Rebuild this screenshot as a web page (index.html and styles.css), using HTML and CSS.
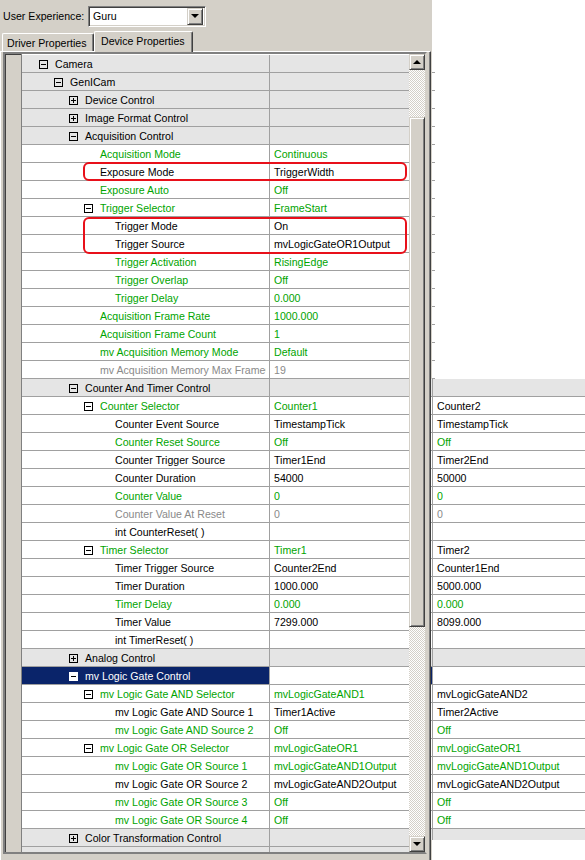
FILE: index.html
```html
<!DOCTYPE html>
<html>
<head>
<meta charset="utf-8">
<link rel="stylesheet" href="styles.css">
</head>
<body>
<div class="win">
  <div class="toolbar">
    <span class="lbl">User Experience:</span>
    <div class="combo"><span class="ctext">Guru</span><span class="cbtn"><i class="dn"></i></span></div>
  </div>
  <div class="tabs">
    <div class="tab">Driver Properties</div>
    <div class="tab act">Device Properties</div>
  </div>
  <div class="panel">
    <div class="frame">
      <div class="gutter"></div>
      <div class="rows">
        <div class="row cat"><div class="nm l0"><i class="bx"></i><span>Camera</span></div><div class="vl"></div></div>
        <div class="row cat"><div class="nm l1"><i class="bx"></i><span>GenICam</span></div><div class="vl"></div></div>
        <div class="row cat"><div class="nm l2"><i class="bx pl"></i><span>Device Control</span></div><div class="vl"></div></div>
        <div class="row cat"><div class="nm l2"><i class="bx pl"></i><span>Image Format Control</span></div><div class="vl"></div></div>
        <div class="row cat"><div class="nm l2"><i class="bx"></i><span>Acquisition Control</span></div><div class="vl"></div></div>
        <div class="row g"><div class="nm l3"><i class="sl"></i><span>Acquisition Mode</span></div><div class="vl"><span>Continuous</span></div></div>
        <div class="row"><div class="nm l3"><i class="sl"></i><span>Exposure Mode</span></div><div class="vl"><span>TriggerWidth</span></div></div>
        <div class="row g"><div class="nm l3"><i class="sl"></i><span>Exposure Auto</span></div><div class="vl"><span>Off</span></div></div>
        <div class="row g"><div class="nm l3"><i class="bx"></i><span>Trigger Selector</span></div><div class="vl"><span>FrameStart</span></div></div>
        <div class="row"><div class="nm l4"><i class="sl"></i><span>Trigger Mode</span></div><div class="vl"><span>On</span></div></div>
        <div class="row"><div class="nm l4"><i class="sl"></i><span>Trigger Source</span></div><div class="vl"><span>mvLogicGateOR1Output</span></div></div>
        <div class="row g"><div class="nm l4"><i class="sl"></i><span>Trigger Activation</span></div><div class="vl"><span>RisingEdge</span></div></div>
        <div class="row g"><div class="nm l4"><i class="sl"></i><span>Trigger Overlap</span></div><div class="vl"><span>Off</span></div></div>
        <div class="row g"><div class="nm l4"><i class="sl"></i><span>Trigger Delay</span></div><div class="vl"><span>0.000</span></div></div>
        <div class="row g"><div class="nm l3"><i class="sl"></i><span>Acquisition Frame Rate</span></div><div class="vl"><span>1000.000</span></div></div>
        <div class="row g"><div class="nm l3"><i class="sl"></i><span>Acquisition Frame Count</span></div><div class="vl"><span>1</span></div></div>
        <div class="row g"><div class="nm l3"><i class="sl"></i><span>mv Acquisition Memory Mode</span></div><div class="vl"><span>Default</span></div></div>
        <div class="row d"><div class="nm l3"><i class="sl"></i><span class="clip">mv Acquisition Memory Max FrameCount</span></div><div class="vl"><span>19</span></div></div>
        <div class="row cat"><div class="nm l2"><i class="bx"></i><span>Counter And Timer Control</span></div><div class="vl"></div></div>
        <div class="row g"><div class="nm l3"><i class="bx"></i><span>Counter Selector</span></div><div class="vl"><span>Counter1</span></div></div>
        <div class="row"><div class="nm l4"><i class="sl"></i><span>Counter Event Source</span></div><div class="vl"><span>TimestampTick</span></div></div>
        <div class="row g"><div class="nm l4"><i class="sl"></i><span>Counter Reset Source</span></div><div class="vl"><span>Off</span></div></div>
        <div class="row"><div class="nm l4"><i class="sl"></i><span>Counter Trigger Source</span></div><div class="vl"><span>Timer1End</span></div></div>
        <div class="row"><div class="nm l4"><i class="sl"></i><span>Counter Duration</span></div><div class="vl"><span>54000</span></div></div>
        <div class="row g"><div class="nm l4"><i class="sl"></i><span>Counter Value</span></div><div class="vl"><span>0</span></div></div>
        <div class="row d"><div class="nm l4"><i class="sl"></i><span>Counter Value At Reset</span></div><div class="vl"><span>0</span></div></div>
        <div class="row"><div class="nm l4"><i class="sl"></i><span>int CounterReset( )</span></div><div class="vl"></div></div>
        <div class="row g"><div class="nm l3"><i class="bx"></i><span>Timer Selector</span></div><div class="vl"><span>Timer1</span></div></div>
        <div class="row"><div class="nm l4"><i class="sl"></i><span>Timer Trigger Source</span></div><div class="vl"><span>Counter2End</span></div></div>
        <div class="row"><div class="nm l4"><i class="sl"></i><span>Timer Duration</span></div><div class="vl"><span>1000.000</span></div></div>
        <div class="row g"><div class="nm l4"><i class="sl"></i><span>Timer Delay</span></div><div class="vl"><span>0.000</span></div></div>
        <div class="row"><div class="nm l4"><i class="sl"></i><span>Timer Value</span></div><div class="vl"><span>7299.000</span></div></div>
        <div class="row"><div class="nm l4"><i class="sl"></i><span>int TimerReset( )</span></div><div class="vl"></div></div>
        <div class="row cat"><div class="nm l2"><i class="bx pl"></i><span>Analog Control</span></div><div class="vl"></div></div>
        <div class="row sel"><div class="nm l2"><i class="bx"></i><span>mv Logic Gate Control</span></div><div class="vl"></div></div>
        <div class="row g"><div class="nm l3"><i class="bx"></i><span>mv Logic Gate AND Selector</span></div><div class="vl"><span>mvLogicGateAND1</span></div></div>
        <div class="row"><div class="nm l4"><i class="sl"></i><span>mv Logic Gate AND Source 1</span></div><div class="vl"><span>Timer1Active</span></div></div>
        <div class="row g"><div class="nm l4"><i class="sl"></i><span>mv Logic Gate AND Source 2</span></div><div class="vl"><span>Off</span></div></div>
        <div class="row g"><div class="nm l3"><i class="bx"></i><span>mv Logic Gate OR Selector</span></div><div class="vl"><span>mvLogicGateOR1</span></div></div>
        <div class="row g"><div class="nm l4"><i class="sl"></i><span>mv Logic Gate OR Source 1</span></div><div class="vl"><span>mvLogicGateAND1Output</span></div></div>
        <div class="row"><div class="nm l4"><i class="sl"></i><span>mv Logic Gate OR Source 2</span></div><div class="vl"><span>mvLogicGateAND2Output</span></div></div>
        <div class="row g"><div class="nm l4"><i class="sl"></i><span>mv Logic Gate OR Source 3</span></div><div class="vl"><span>Off</span></div></div>
        <div class="row g"><div class="nm l4"><i class="sl"></i><span>mv Logic Gate OR Source 4</span></div><div class="vl"><span>Off</span></div></div>
        <div class="row cat"><div class="nm l2"><i class="bx pl"></i><span>Color Transformation Control</span></div><div class="vl"></div></div>
        <div class="row cat"><div class="nm l2"><i class="bx pl"></i><span>mv Flat Field Correction Control</span></div><div class="vl"></div></div>
      </div>
      <div class="sbar">
        <div class="sbtn"><i class="up"></i></div>
        <div class="track">
          <div class="thumb"></div>
        </div>
        <div class="sbtn"><i class="dn"></i></div>
      </div>
    </div>
  </div>

  <div class="mark m1"></div>
  <div class="mark m2"></div>
</div>

<div class="ticks"></div>

<div class="ov">
  <div class="orow cat"><i class="sv"></i><div class="ovl"></div></div>
  <div class="orow"><i class="sv"></i><div class="ovl"><span>Counter2</span></div></div>
  <div class="orow"><i class="sv"></i><div class="ovl"><span>TimestampTick</span></div></div>
  <div class="orow g"><i class="sv"></i><div class="ovl"><span>Off</span></div></div>
  <div class="orow"><i class="sv"></i><div class="ovl"><span>Timer2End</span></div></div>
  <div class="orow"><i class="sv"></i><div class="ovl"><span>50000</span></div></div>
  <div class="orow g"><i class="sv"></i><div class="ovl"><span>0</span></div></div>
  <div class="orow d"><i class="sv"></i><div class="ovl"><span>0</span></div></div>
  <div class="orow"><i class="sv"></i><div class="ovl"></div></div>
  <div class="orow"><i class="sv"></i><div class="ovl"><span>Timer2</span></div></div>
  <div class="orow"><i class="sv"></i><div class="ovl"><span>Counter1End</span></div></div>
  <div class="orow"><i class="sv"></i><div class="ovl"><span>5000.000</span></div></div>
  <div class="orow g"><i class="sv"></i><div class="ovl"><span>0.000</span></div></div>
  <div class="orow"><i class="sv"></i><div class="ovl"><span>8099.000</span></div></div>
  <div class="orow"><i class="sv"></i><div class="ovl"></div></div>
  <div class="orow cat"><i class="sv"></i><div class="ovl"></div></div>
  <div class="orow sel"><i class="sv"></i><div class="ovl"></div></div>
  <div class="orow"><i class="sv"></i><div class="ovl"><span>mvLogicGateAND2</span></div></div>
  <div class="orow"><i class="sv"></i><div class="ovl"><span>Timer2Active</span></div></div>
  <div class="orow g"><i class="sv"></i><div class="ovl"><span>Off</span></div></div>
  <div class="orow g"><i class="sv"></i><div class="ovl"><span>mvLogicGateOR1</span></div></div>
  <div class="orow g"><i class="sv"></i><div class="ovl"><span>mvLogicGateAND1Output</span></div></div>
  <div class="orow"><i class="sv"></i><div class="ovl"><span>mvLogicGateAND2Output</span></div></div>
  <div class="orow g"><i class="sv"></i><div class="ovl"><span>Off</span></div></div>
  <div class="orow g"><i class="sv"></i><div class="ovl"><span>Off</span></div></div>
  <div class="orow cat"><i class="sv"></i><div class="ovl"></div></div>
</div>
</body>
</html>
```

FILE: styles.css
```css
* { box-sizing: border-box; }
html, body { margin: 0; padding: 0; }
body {
  background: #fff;
  width: 585px;
  height: 860px;
  overflow: hidden;
  position: relative;
  font-family: "Liberation Sans", Arial, sans-serif;
  font-size: 10.6px;
  color: #000;
}
.win {
  width: 432px;
  height: 860px;
  background: #d4d0c8;
  position: relative;
  overflow: hidden;
}

/* toolbar */
.toolbar {
  height: 31px;
  display: flex;
  align-items: center;
  padding-left: 3px;
  padding-top: 1px;
}
.lbl { width: 85px; }
.combo {
  width: 118px;
  height: 21px;
  background: #fff;
  border-top: 1px solid #808080;
  border-left: 1px solid #808080;
  border-right: 1px solid #fff;
  border-bottom: 1px solid #fff;
  box-shadow: inset 1px 1px 0 #404040, inset -1px -1px 0 #d4d0c8;
  display: flex;
  align-items: center;
  padding: 2px;
}
.ctext { flex: 1; padding-left: 2px; }
.cbtn {
  width: 16px;
  height: 17px;
  background: #d4d0c8;
  border-top: 1px solid #d4d0c8;
  border-left: 1px solid #d4d0c8;
  border-right: 1px solid #404040;
  border-bottom: 1px solid #404040;
  box-shadow: inset 1px 1px 0 #fff, inset -1px -1px 0 #808080;
  display: flex;
  align-items: center;
  justify-content: center;
}
.dn, .up {
  display: block;
  width: 0;
  height: 0;
  border-left: 4px solid transparent;
  border-right: 4px solid transparent;
}
.dn { border-top: 4px solid #000; }
.up { border-bottom: 4px solid #000; }

/* tabs */
.tabs {
  height: 20px;
  display: flex;
  align-items: flex-end;
  padding-left: 2px;
}
.tab {
  height: 18px;
  padding: 0 4px;
  display: flex;
  align-items: center;
  border-top: 1px solid #fff;
  border-left: 1px solid #fff;
  border-right: 1px solid #404040;
  border-radius: 2px 2px 0 0;
  box-shadow: inset -1px 0 0 #808080;
  width: 92px;
}
.tab.act {
  height: 21px;
  width: 99px;
  padding-left: 6px;
  padding-bottom: 2px;
  margin-bottom: -1px;
  background: #d4d0c8;
  position: relative;
  z-index: 2;
}

/* panel */
.panel {
  height: 809px;
  width: 431px;
  border-top: 1px solid #fff;
  border-left: 1px solid #fff;
  border-right: 1px solid #404040;
  box-shadow: inset -1px 0 0 #808080;
  padding: 0 3px 0 2px;
}
.frame {
  display: flex;
  width: 424px;
  height: 802px;
  border-top: 2px solid #808080;
  border-left: 2px solid #808080;
  border-right: 2px solid #d4d0c8;
  border-bottom: 2px solid #808080;
  box-shadow: inset 1px 1px 0 #404040;
}
.gutter {
  width: 17px;
  flex: none;
  border-right: 1px solid #808080;
}
.rows {
  width: 387px;
  flex: none;
  overflow: hidden;
  background: #fff;
  padding-top: 1px;
  height: 798px;
}
.row {
  height: 18px;
  display: flex;
  border-bottom: 1px solid #a0a0a0;
  line-height: 17px;
  white-space: nowrap;
}
.nm {
  width: 248px;
  flex: none;
  border-right: 1px solid #a0a0a0;
  display: flex;
  align-items: center;
  overflow: hidden;
}
.nm span, .vl span, .ovl span {
  position: relative;
  top: 1px;
}
.nm span.clip {
  display: block;
  overflow: hidden;
  width: 166px;
  flex: none;
}
.vl {
  flex: 1;
  padding-left: 4px;
  overflow: hidden;
}
.l0 { padding-left: 17px; }
.l1 { padding-left: 32px; }
.l2 { padding-left: 47px; }
.l3 { padding-left: 62px; }
.l4 { padding-left: 77px; }
.sl { width: 16px; flex: none; display: block; }
.bx {
  display: block;
  flex: none;
  width: 9px;
  height: 9px;
  margin-right: 7px;
  margin-top: 1px;
  border: 1px solid #000;
  position: relative;
}
.bx::before {
  content: "";
  position: absolute;
  left: 1px;
  top: 3px;
  width: 5px;
  height: 1px;
  background: #000;
}
.bx.pl::after {
  content: "";
  position: absolute;
  left: 3px;
  top: 1px;
  width: 1px;
  height: 5px;
  background: #000;
}
.cat { background: #e5e5e5; }
.g { color: #00a400; }
.d { color: #8a8a8a; }
.sel .nm { background: #0a246a; color: #fff; }
.sel .bx { background: #fff; border-color: #fff; }

/* scrollbar */
.sbar {
  width: 16px;
  flex: none;
  display: flex;
  flex-direction: column;
  height: 798px;
}
.sbtn {
  height: 16px;
  flex: none;
  background: #d4d0c8;
  border-top: 1px solid #d4d0c8;
  border-left: 1px solid #d4d0c8;
  border-right: 1px solid #404040;
  border-bottom: 1px solid #404040;
  box-shadow: inset 1px 1px 0 #fff, inset -1px -1px 0 #808080;
  display: flex;
  align-items: center;
  justify-content: center;
}
.track {
  flex: 1;
  background: repeating-conic-gradient(#d4d0c8 0 25%, #fff 0 50%) 0 0 / 2px 2px;
  padding-top: 47px;
}
.thumb {
  height: 510px;
  background: #d4d0c8;
  border-top: 1px solid #d4d0c8;
  border-left: 1px solid #d4d0c8;
  border-right: 1px solid #404040;
  border-bottom: 1px solid #404040;
  box-shadow: inset 1px 1px 0 #fff, inset -1px -1px 0 #808080;
}

/* annotation marks */
.mark {
  position: absolute;
  left: 83px;
  width: 324px;
  border: 2px solid #e8101a;
  border-radius: 6px;
}
.m1 { top: 162px; height: 19px; }
.m2 { top: 217px; height: 37px; }

/* overlay second panel */
.ticks {
  position: absolute;
  left: 432px;
  top: 55px;
  width: 3px;
  height: 324px;
  background: repeating-linear-gradient(to bottom, transparent 0 17px, #a0a0a0 17px 18px);
}
.ov {
  position: absolute;
  left: 431px;
  top: 379px;
  width: 154px;
  height: 461px;
  overflow: hidden;
  background: #fff;
}
.orow {
  height: 18px;
  display: flex;
  border-bottom: 1px solid #a0a0a0;
  line-height: 17px;
  white-space: nowrap;
}
.sv {
  display: block;
  width: 1px;
  flex: none;
  border-right: 1px solid #a0a0a0;
  box-sizing: content-box;
}
.ovl { flex: 1; padding-left: 4px; }
.orow.sel .sv { background: #0a246a; }
```
